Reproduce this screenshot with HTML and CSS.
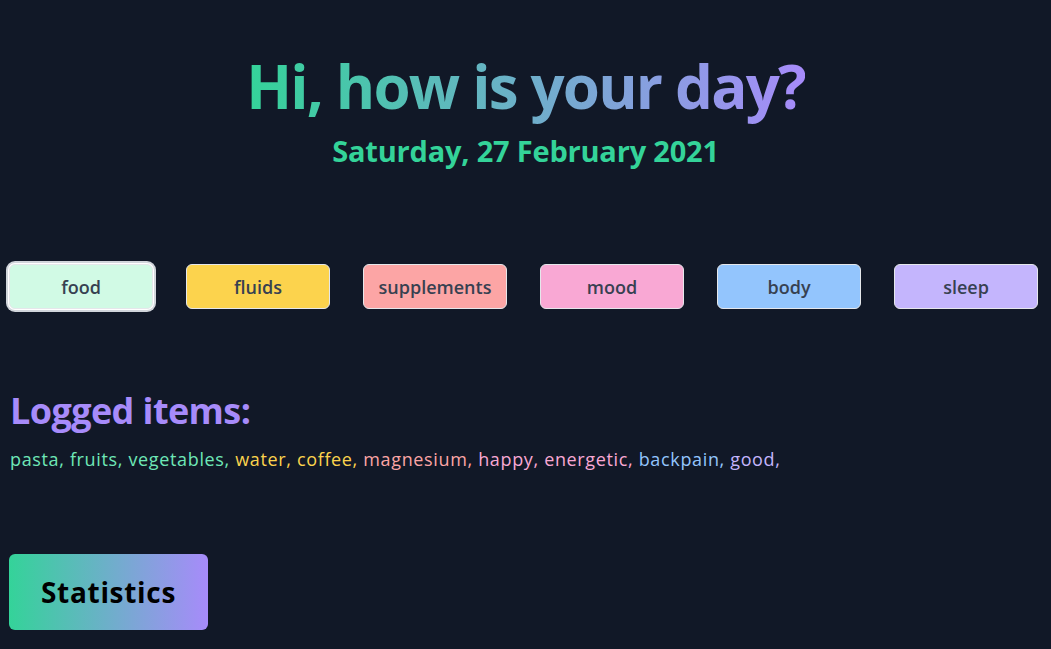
FILE: index.html
```html
<!DOCTYPE html>
<html lang="en">
<head>
<meta charset="utf-8">
<title>Daily log</title>
<link rel="stylesheet" href="styles.css">
</head>
<body>
<header class="hero">
  <h1 class="hero-title">Hi, how is your day?</h1>
  <p class="hero-date">Saturday, 27 February 2021</p>
</header>
<nav class="categories">
  <button class="cat cat-food is-active">food</button>
  <button class="cat cat-fluids">fluids</button>
  <button class="cat cat-supplements">supplements</button>
  <button class="cat cat-mood">mood</button>
  <button class="cat cat-body">body</button>
  <button class="cat cat-sleep">sleep</button>
</nav>
<section class="logged">
  <h2 class="logged-title">Logged items:</h2>
  <p class="logged-list"><span class="it-food">pasta, </span><span class="it-food">fruits, </span><span class="it-food">vegetables, </span><span class="it-fluids">water, </span><span class="it-fluids">coffee, </span><span class="it-supp">magnesium, </span><span class="it-mood">happy, </span><span class="it-mood">energetic, </span><span class="it-body">backpain, </span><span class="it-sleep">good, </span></p>
</section>
<div class="actions">
  <button class="stats-btn">Statistics</button>
</div>
</body>
</html>
```

FILE: styles.css
```css
html, body {
  margin: 0;
  padding: 0;
  background: #111827;
}
body {
  font-family: "Open Sans", Lato, sans-serif;
  width: 1051px;
  height: 649px;
  overflow: hidden;
}
.hero {
  text-align: center;
  padding-top: 56px;
}
.hero-title {
  display: inline-block;
  margin: 0;
  padding-bottom: 10px;
  font-size: 60px;
  line-height: 60px;
  font-weight: 700;
  letter-spacing: -1.8px;
  background: linear-gradient(90deg, #34d399, #a78bfa);
  -webkit-background-clip: text;
  background-clip: text;
  color: transparent;
}
.hero-date {
  margin: 7px 0 0;
  font-size: 29px;
  line-height: 36px;
  font-weight: 700;
  letter-spacing: -0.2px;
  color: #34d399;
}
.categories {
  display: flex;
  gap: 33px;
  padding: 0 9px;
  margin-top: 95px;
}
.cat {
  width: 144px;
  height: 45px;
  border: 1px solid #e5e7eb;
  border-radius: 6px;
  font-family: inherit;
  font-size: 18px;
  font-weight: 600;
  color: #374151;
  padding: 0;
}
.cat-food { background: #d1fae5; }
.cat-fluids { background: #fcd34d; }
.cat-supplements { background: #fca5a5; }
.cat-mood { background: #f9a8d4; }
.cat-body { background: #93c5fd; }
.cat-sleep { background: #c4b5fd; }
.cat.is-active {
  box-shadow: 0 0 0 1px #ffffff, 0 0 0 3px #d1d5db;
}
.logged {
  padding-left: 10px;
  margin-top: 82px;
}
.logged-title {
  margin: 0;
  font-size: 36px;
  line-height: 40px;
  font-weight: 700;
  letter-spacing: -0.6px;
  color: #a78bfa;
}
.logged-list {
  margin: 14px 0 0;
  font-size: 18px;
  line-height: 28px;
  letter-spacing: 0.65px;
}
.it-food { color: #6ee7b7; }
.it-fluids { color: #fcd34d; }
.it-supp { color: #fca5a5; }
.it-mood { color: #f9a8d4; }
.it-body { color: #93c5fd; }
.it-sleep { color: #c4b5fd; }
.actions {
  padding-left: 9px;
  margin-top: 81px;
}
.stats-btn {
  width: 199px;
  height: 76px;
  border: 0;
  border-radius: 6px;
  background: linear-gradient(90deg, #34d399, #a78bfa);
  font-family: inherit;
  font-size: 28px;
  font-weight: 700;
  letter-spacing: 0.7px;
  color: #000;
}
```
